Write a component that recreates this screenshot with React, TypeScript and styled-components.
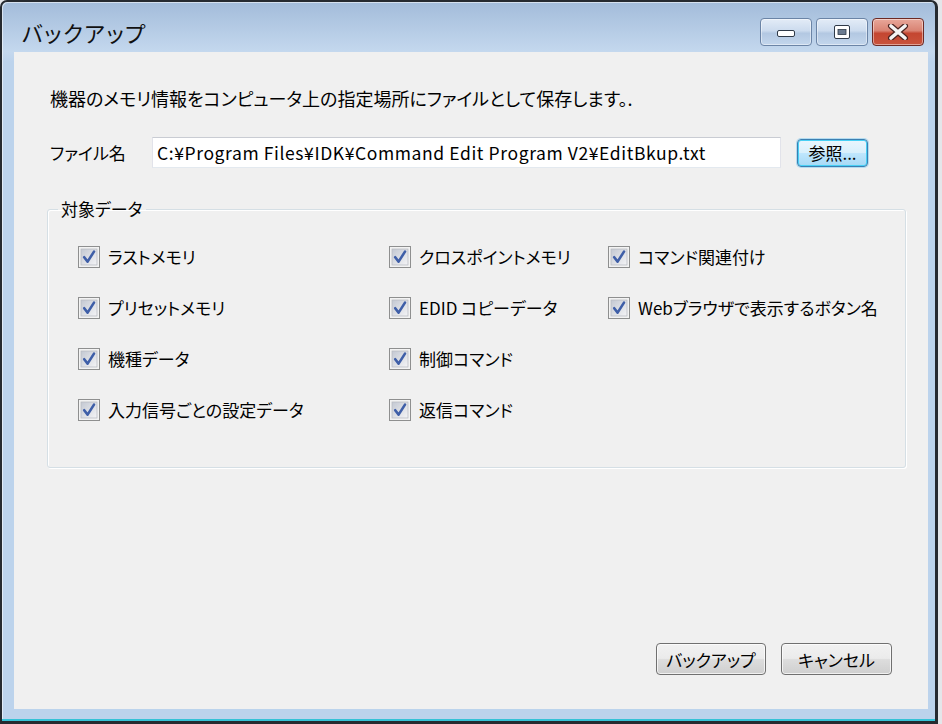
import React from "react";
import styled, { createGlobalStyle } from "styled-components";

const GlobalStyle = createGlobalStyle`
  html, body {
    margin: 0;
    padding: 0;
    background: #e4e6ea;
  }
  body {
    font-family: "Noto Sans CJK JP", "Noto Sans", sans-serif;
  }
`;

const FONT = `"Noto Sans CJK JP", "Noto Sans", sans-serif`;

const Window = styled.div`
  width: 938px;
  height: 724px;
  box-sizing: border-box;
  display: flex;
  flex-direction: column;
  background: linear-gradient(#a3bcda 0px, #c4d8ee 50px, #bcd3ec 60px, #bcd3ec 100%);
  border: 2px solid #262a30;
  border-right-width: 3px;
  border-bottom-width: 3px;
  border-radius: 7px 7px 0 0;
  box-shadow: inset 0 -2px 0 #35c2d6, inset 1px 1px 0 rgba(255, 255, 255, 0.55);
`;

const TitleBar = styled.div`
  height: 50px;
  flex: none;
  display: flex;
  align-items: flex-start;
  justify-content: space-between;
  padding: 16px 11px 0 20px;
  box-sizing: border-box;
`;

const Title = styled.div`
  font-family: ${FONT};
  font-size: 22px;
  line-height: 28px;
  color: #111;
  font-feature-settings: "palt";
  letter-spacing: 1.5px;
`;

const Controls = styled.div`
  display: flex;
  gap: 4px;
`;

const CtrlButton = styled.div<{ $close?: boolean }>`
  width: 52px;
  height: 28px;
  box-sizing: border-box;
  border-radius: 4px;
  display: flex;
  align-items: center;
  justify-content: center;
  border: 1px solid ${(p) => (p.$close ? "#6d2a24" : "#6b84a6")};
  background: ${(p) =>
    p.$close
      ? "linear-gradient(#e8a79a 0%, #d98373 45%, #c44631 55%, #c9533c 100%)"
      : "linear-gradient(#e3ecf7 0%, #ccdbee 45%, #b3c8e2 55%, #c3d6ec 100%)"};
  box-shadow: inset 0 0 0 1px rgba(255, 255, 255, 0.45);
`;

const Client = styled.div`
  flex: 1;
  margin: 0 7px 12px 12px;
  background: #f0f0f0;
  display: flex;
  flex-direction: column;
  padding: 0 22px 34px 33px;
`;

const Description = styled.div`
  margin: 34px 0 0 3px;
  font-size: 18px;
  line-height: 24px;
  color: #000;
  font-feature-settings: "palt";
`;

const FileRow = styled.div`
  margin: 27px 0 0 3px;
  display: flex;
  align-items: center;
`;

const FieldLabel = styled.div`
  width: 102px;
  font-size: 17px;
  line-height: 24px;
  font-feature-settings: "palt";
`;

const PathInput = styled.input`
  width: 629px;
  height: 31px;
  box-sizing: border-box;
  border: 1px solid;
  border-color: #c9ccd3 #e2e3ea #e3e9ef #e2e3ea;
  background: #fff;
  padding: 0 4px;
  font-family: ${FONT};
  font-size: 17.5px;
  letter-spacing: 0.6px;
  color: #000;
  outline: none;
`;

const Button = styled.button<{ $focus?: boolean; $w: number }>`
  width: ${(p) => p.$w}px;
  height: ${(p) => (p.$focus ? 28 : 32)}px;
  box-sizing: border-box;
  padding: 0;
  border-radius: 4px;
  font-family: ${FONT};
  font-size: 17px;
  color: #000;
  font-feature-settings: "palt";
  border: 1px solid ${(p) => (p.$focus ? "#3c7fb1" : "#707070")};
  background: ${(p) =>
    p.$focus
      ? "linear-gradient(#eaf6fd 0%, #d9f0fc 48%, #bee6fd 52%, #a7d9f5 100%)"
      : "linear-gradient(#f2f2f2 0%, #ebebeb 48%, #dddddd 52%, #cfcfcf 100%)"};
  box-shadow: ${(p) =>
    p.$focus
      ? "inset 0 0 0 1px #48d0f5, 0 0 0 1px rgba(120, 200, 240, 0.5)"
      : "inset 0 0 0 1px rgba(255, 255, 255, 0.7)"};
`;

const BrowseButton = styled(Button)`
  margin-left: 16px;
`;

const Group = styled.fieldset`
  margin: 30px 0 0 0;
  padding: 26px 0 0 0;
  height: 270px;
  box-sizing: border-box;
  border: 1px solid #d5dfe5;
  border-radius: 3px;
  box-shadow: inset 1px 1px 0 #fff, 1px 1px 0 #fff;
  min-width: 0;
`;

const Legend = styled.legend`
  margin-left: 10px;
  padding: 0 3px;
  font-size: 17px;
  line-height: 22px;
  font-feature-settings: "palt";
`;

const Grid = styled.div`
  display: grid;
  grid-auto-flow: column;
  grid-template-rows: repeat(4, 22px);
  grid-template-columns: 311px 219px auto;
  row-gap: 29px;
  padding-left: 30px;
`;

const Item = styled.label`
  display: flex;
  align-items: center;
  gap: 8px;
  font-size: 17px;
  line-height: 22px;
  white-space: nowrap;
  font-feature-settings: "palt";
`;

const ButtonRow = styled.div`
  margin-top: auto;
  margin-right: 14px;
  display: flex;
  justify-content: flex-end;
  gap: 15px;
`;

function CheckBox() {
  return (
    <svg width="22" height="22" viewBox="0 0 22 22">
      <defs>
        <linearGradient id="cbg" x1="0" y1="0" x2="1" y2="1">
          <stop offset="0" stopColor="#c3c8d2" />
          <stop offset="1" stopColor="#f4f4f6" />
        </linearGradient>
      </defs>
      <rect x="0.5" y="0.5" width="21" height="21" fill="#f3f3f3" stroke="#8e8f8f" />
      <rect x="3" y="3" width="16" height="16" fill="url(#cbg)" stroke="#b9bcc2" strokeWidth="0.8" />
      <path
        d="M6.2 11.2 L9.6 15.6 L16 5.6"
        fill="none"
        stroke="#3f5fa8"
        strokeWidth="2.6"
        strokeLinecap="round"
        strokeLinejoin="round"
      />
    </svg>
  );
}

function MinGlyph() {
  return (
    <svg width="22" height="14" viewBox="0 0 22 14">
      <rect x="2.5" y="5.5" width="17" height="6" rx="1.5" fill="#fff" stroke="#2f3a48" />
    </svg>
  );
}

function MaxGlyph() {
  return (
    <svg width="22" height="16" viewBox="0 0 22 16">
      <rect x="3.5" y="1.5" width="15" height="13" rx="1.5" fill="#fff" stroke="#2f3a48" />
      <rect x="7" y="5.5" width="8" height="5" fill="#6b7b90" stroke="#2f3a48" strokeWidth="0.8" />
    </svg>
  );
}

function CloseGlyph() {
  return (
    <svg width="24" height="16" viewBox="0 0 24 16">
      <path d="M5 2 L19 14 M19 2 L5 14" stroke="#4a2320" strokeWidth="6" strokeLinecap="round" />
      <path d="M5 2 L19 14 M19 2 L5 14" stroke="#f4f4f4" strokeWidth="3.6" strokeLinecap="round" />
    </svg>
  );
}

const columns = [
  ["ラストメモリ", "プリセットメモリ", "機種データ", "入力信号ごとの設定データ"],
  ["クロスポイントメモリ", "EDID コピーデータ", "制御コマンド", "返信コマンド"],
  ["コマンド関連付け", "Webブラウザで表示するボタン名"],
];

export default function App() {
  return (
    <>
      <GlobalStyle />
      <Window>
        <TitleBar>
          <Title>バックアップ</Title>
          <Controls>
            <CtrlButton>
              <MinGlyph />
            </CtrlButton>
            <CtrlButton>
              <MaxGlyph />
            </CtrlButton>
            <CtrlButton $close>
              <CloseGlyph />
            </CtrlButton>
          </Controls>
        </TitleBar>
        <Client>
          <Description>機器のメモリ情報をコンピュータ上の指定場所にファイルとして保存します。.</Description>
          <FileRow>
            <FieldLabel>ファイル名</FieldLabel>
            <PathInput readOnly defaultValue="C:¥Program Files¥IDK¥Command Edit Program V2¥EditBkup.txt" />
            <BrowseButton $focus $w={71}>参照...</BrowseButton>
          </FileRow>
          <Group>
            <Legend>対象データ</Legend>
            <Grid>
              {columns.map((col, ci) =>
                col.map((text) => (
                  <Item key={ci + text}>
                    <CheckBox />
                    {text}
                  </Item>
                ))
              )}
            </Grid>
          </Group>
          <ButtonRow>
            <Button $w={110}>バックアップ</Button>
            <Button $w={111}>キャンセル</Button>
          </ButtonRow>
        </Client>
      </Window>
    </>
  );
}
